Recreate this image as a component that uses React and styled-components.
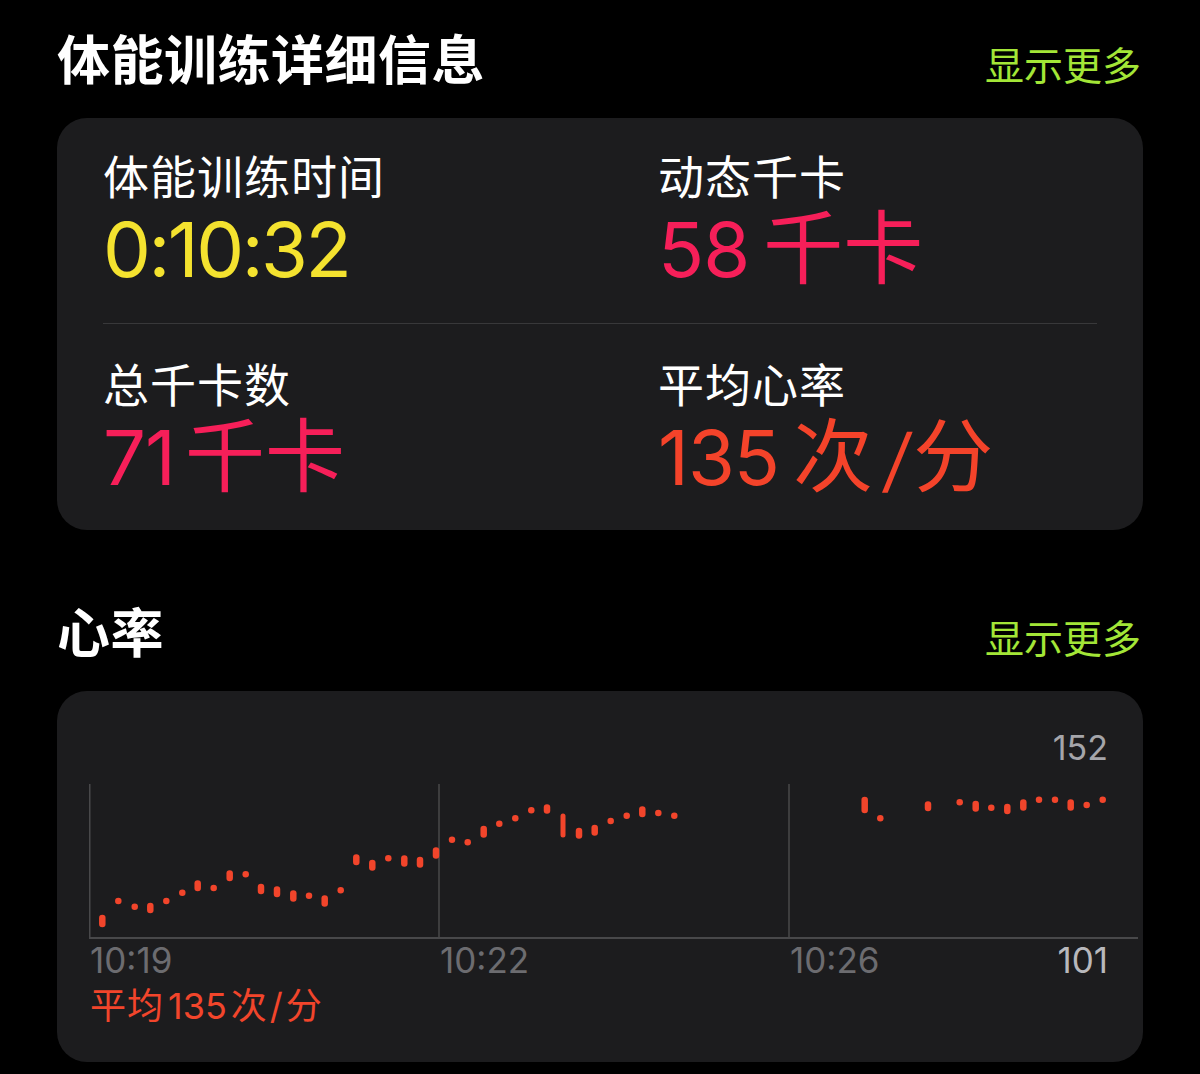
import React from "react";
import styled, { createGlobalStyle } from "styled-components";

const GlobalStyle = createGlobalStyle`
  html, body {
    margin: 0;
    padding: 0;
    background: #000;
  }
  body {
    font-family: "Noto Sans CJK SC", "Noto Sans", sans-serif;
    color: #fff;
    -webkit-font-smoothing: antialiased;
  }
`;

const Page = styled.div`
  width: 1200px;
  box-sizing: border-box;
  padding: 25px 57px 0;
  display: flex;
  flex-direction: column;
`;

const Section = styled.section`
  display: flex;
  flex-direction: column;
  gap: 29px;
  & + & {
    margin-top: 68px;
  }
`;

const SectionHeader = styled.div`
  display: flex;
  justify-content: space-between;
  align-items: baseline;
`;

const Title = styled.h2`
  margin: 0;
  font-size: 53px;
  line-height: 64px;
  font-weight: 700;
  color: #fff;
  letter-spacing: 0.5px;
`;

const ShowMore = styled.a`
  font-size: 39px;
  line-height: 48px;
  color: #a3e637;
  text-decoration: none;
  margin-right: 2px;
`;

const Card = styled.div`
  background: #1c1c1e;
  border-radius: 30px;
  box-sizing: border-box;
`;

const MetricsCard = styled(Card)`
  padding: 28px 46px 0;
`;

const MetricRow = styled.div`
  display: grid;
  grid-template-columns: 555px 1fr;
  padding: ${(p) => (p.$first ? "0 0 31px" : "30px 0 30px")};
`;

const Divider = styled.div`
  height: 1px;
  background: #38383a;
`;

const Metric = styled.div`
  display: flex;
  flex-direction: column;
`;

const Label = styled.div`
  font-size: 46px;
  line-height: 56px;
  color: #fff;
  letter-spacing: 1px;
`;

const Value = styled.div`
  margin-top: 4px;
  font-family: Inter, "Noto Sans CJK SC", sans-serif;
  font-size: 76px;
  line-height: 86px;
  letter-spacing: ${(p) => (p.$tight ? "-2.5px" : "-1px")};
  color: ${(p) => p.$color};
  white-space: nowrap;
`;

const Unit = styled.span`
  font-family: "Noto Sans CJK SC", sans-serif;
  font-size: 80px;
  line-height: 0;
  letter-spacing: 0;
  margin-left: ${(p) => (p.$gap === undefined ? 14 : p.$gap)}px;
`;

const Slash = styled.span`
  font-family: Inter, sans-serif;
  font-size: 70px;
  line-height: 0;
  margin: 0 4px 0 12px;
  display: inline-block;
  transform: skewX(-8deg);
`;

const ChartCard = styled(Card)`
  padding: 37px 5px 35px 32px;
  display: flex;
  flex-direction: column;
`;

const TopValue = styled.div`
  font-family: Inter, sans-serif;
  font-size: 34px;
  line-height: 40px;
  color: #a5a5aa;
  text-align: right;
  padding-right: 30px;
`;

const ChartSvg = styled.svg`
  display: block;
  margin-top: 16px;
`;

const AxisRow = styled.div`
  display: grid;
  grid-template-columns: 350px 350px 1fr;
  font-family: Inter, sans-serif;
  font-size: 35px;
  line-height: 40px;
  color: #6c6c70;
`;

const AxisCell = styled.div`
  display: flex;
  justify-content: space-between;
  padding-right: ${(p) => (p.$last ? "30px" : "0")};
  padding-left: 1px;
`;

const AxisMax = styled.span`
  color: #b8b8bc;
`;

const AvgLabel = styled.div`
  margin-top: 2px;
  font-family: "Noto Sans CJK SC", sans-serif;
  font-size: 36px;
  line-height: 42px;
  color: #f2452b;
  padding-left: 1px;
  letter-spacing: 1px;
`;

const AvgNumber = styled.span`
  font-family: Inter, sans-serif;
  letter-spacing: 0;
  margin: 0 4px 0 4px;
`;

const AvgSlash = styled.span`
  font-family: Inter, sans-serif;
  margin: 0 2px;
`;

const DOT = "#f2452b";

// [x, yTop, yBottom] in page coordinates
const points = [
  [102.3, 919, 925],
  [118.3, 902, 902],
  [134.7, 907.7, 907.7],
  [150.3, 907, 911],
  [166.3, 902, 902],
  [182.3, 893.7, 893.7],
  [197.7, 884.5, 889],
  [213.7, 889, 889],
  [229.7, 874.5, 879],
  [245.7, 875.3, 875.3],
  [261, 888, 892],
  [277, 890.5, 895],
  [293.3, 894.5, 899.5],
  [309, 896.7, 896.7],
  [324.7, 899.5, 904.5],
  [340.7, 891.3, 891.3],
  [356.3, 858.5, 863],
  [372.3, 864, 868.5],
  [388.3, 859.3, 859.3],
  [404.3, 859.5, 864.5],
  [420, 861, 865.5],
  [436, 851.5, 856.5],
  [452, 840.7, 840.7],
  [467.7, 843.3, 843.3],
  [483.7, 830, 835.5],
  [499.3, 824.7, 824.7],
  [515.3, 819.3, 819.3],
  [531.3, 811.3, 811.3],
  [547, 808.5, 811.5],
  [563, 817, 836],
  [579, 832, 836.5],
  [594.7, 829, 833.5],
  [610.7, 822, 822],
  [626.7, 816.7, 816.7],
  [642.3, 810.5, 815],
  [658.3, 814, 814],
  [674.3, 816.7, 816.7],
  [864.7, 801, 811],
  [880.3, 819.3, 819.3],
  [928, 805.5, 809],
  [959.7, 803.3, 803.3],
  [975.7, 805, 809.5],
  [991.3, 808.7, 808.7],
  [1007.3, 808, 812],
  [1023.3, 803.5, 808.5],
  [1039, 800.7, 800.7],
  [1055, 800.7, 800.7],
  [1070.7, 803.5, 808.5],
  [1086.7, 806, 806],
  [1102.7, 800.7, 800.7],
];

const OX = 89;
const OY = 785;

function HeartChart() {
  return (
    <ChartSvg width="1049" height="156" viewBox="0 0 1049 156">
      {[0.75, 350, 700].map((x) => (
        <line key={x} x1={x} y1="0" x2={x} y2="154" stroke="#48484a" strokeWidth="1.5" />
      ))}
      <line x1="0" y1="154" x2="1049" y2="154" stroke="#48484a" strokeWidth="2" />
      {points.map(([x, a, b], i) => (
        <line
          key={i}
          x1={x - OX}
          y1={a - OY}
          x2={x - OX}
          y2={b - OY + 0.01}
          stroke={DOT}
          strokeWidth={b - a > 15 ? 5 : 6.5}
          strokeLinecap="round"
        />
      ))}
    </ChartSvg>
  );
}

export default function App() {
  return (
    <>
      <GlobalStyle />
      <Page>
        <Section>
          <SectionHeader>
            <Title>体能训练详细信息</Title>
            <ShowMore>显示更多</ShowMore>
          </SectionHeader>
          <MetricsCard>
            <MetricRow $first>
              <Metric>
                <Label>体能训练时间</Label>
                <Value $color="#f4e22f" $tight>0:10:32</Value>
              </Metric>
              <Metric>
                <Label>动态千卡</Label>
                <Value $color="#f61f59">
                  58<Unit>千卡</Unit>
                </Value>
              </Metric>
            </MetricRow>
            <Divider />
            <MetricRow>
              <Metric>
                <Label>总千卡数</Label>
                <Value $color="#f61f59">
                  71<Unit $gap={10}>千卡</Unit>
                </Value>
              </Metric>
              <Metric>
                <Label>平均心率</Label>
                <Value $color="#f4432a">
                  135<Unit>次</Unit>
                  <Slash>/</Slash>
                  <Unit $gap={0}>分</Unit>
                </Value>
              </Metric>
            </MetricRow>
          </MetricsCard>
        </Section>
        <Section>
          <SectionHeader>
            <Title>心率</Title>
            <ShowMore>显示更多</ShowMore>
          </SectionHeader>
          <ChartCard>
            <TopValue>152</TopValue>
            <HeartChart />
            <AxisRow>
              <AxisCell>10:19</AxisCell>
              <AxisCell>10:22</AxisCell>
              <AxisCell $last>
                <span>10:26</span>
                <AxisMax>101</AxisMax>
              </AxisCell>
            </AxisRow>
            <AvgLabel>
              平均<AvgNumber>135</AvgNumber>次<AvgSlash>/</AvgSlash>分
            </AvgLabel>
          </ChartCard>
        </Section>
      </Page>
    </>
  );
}
